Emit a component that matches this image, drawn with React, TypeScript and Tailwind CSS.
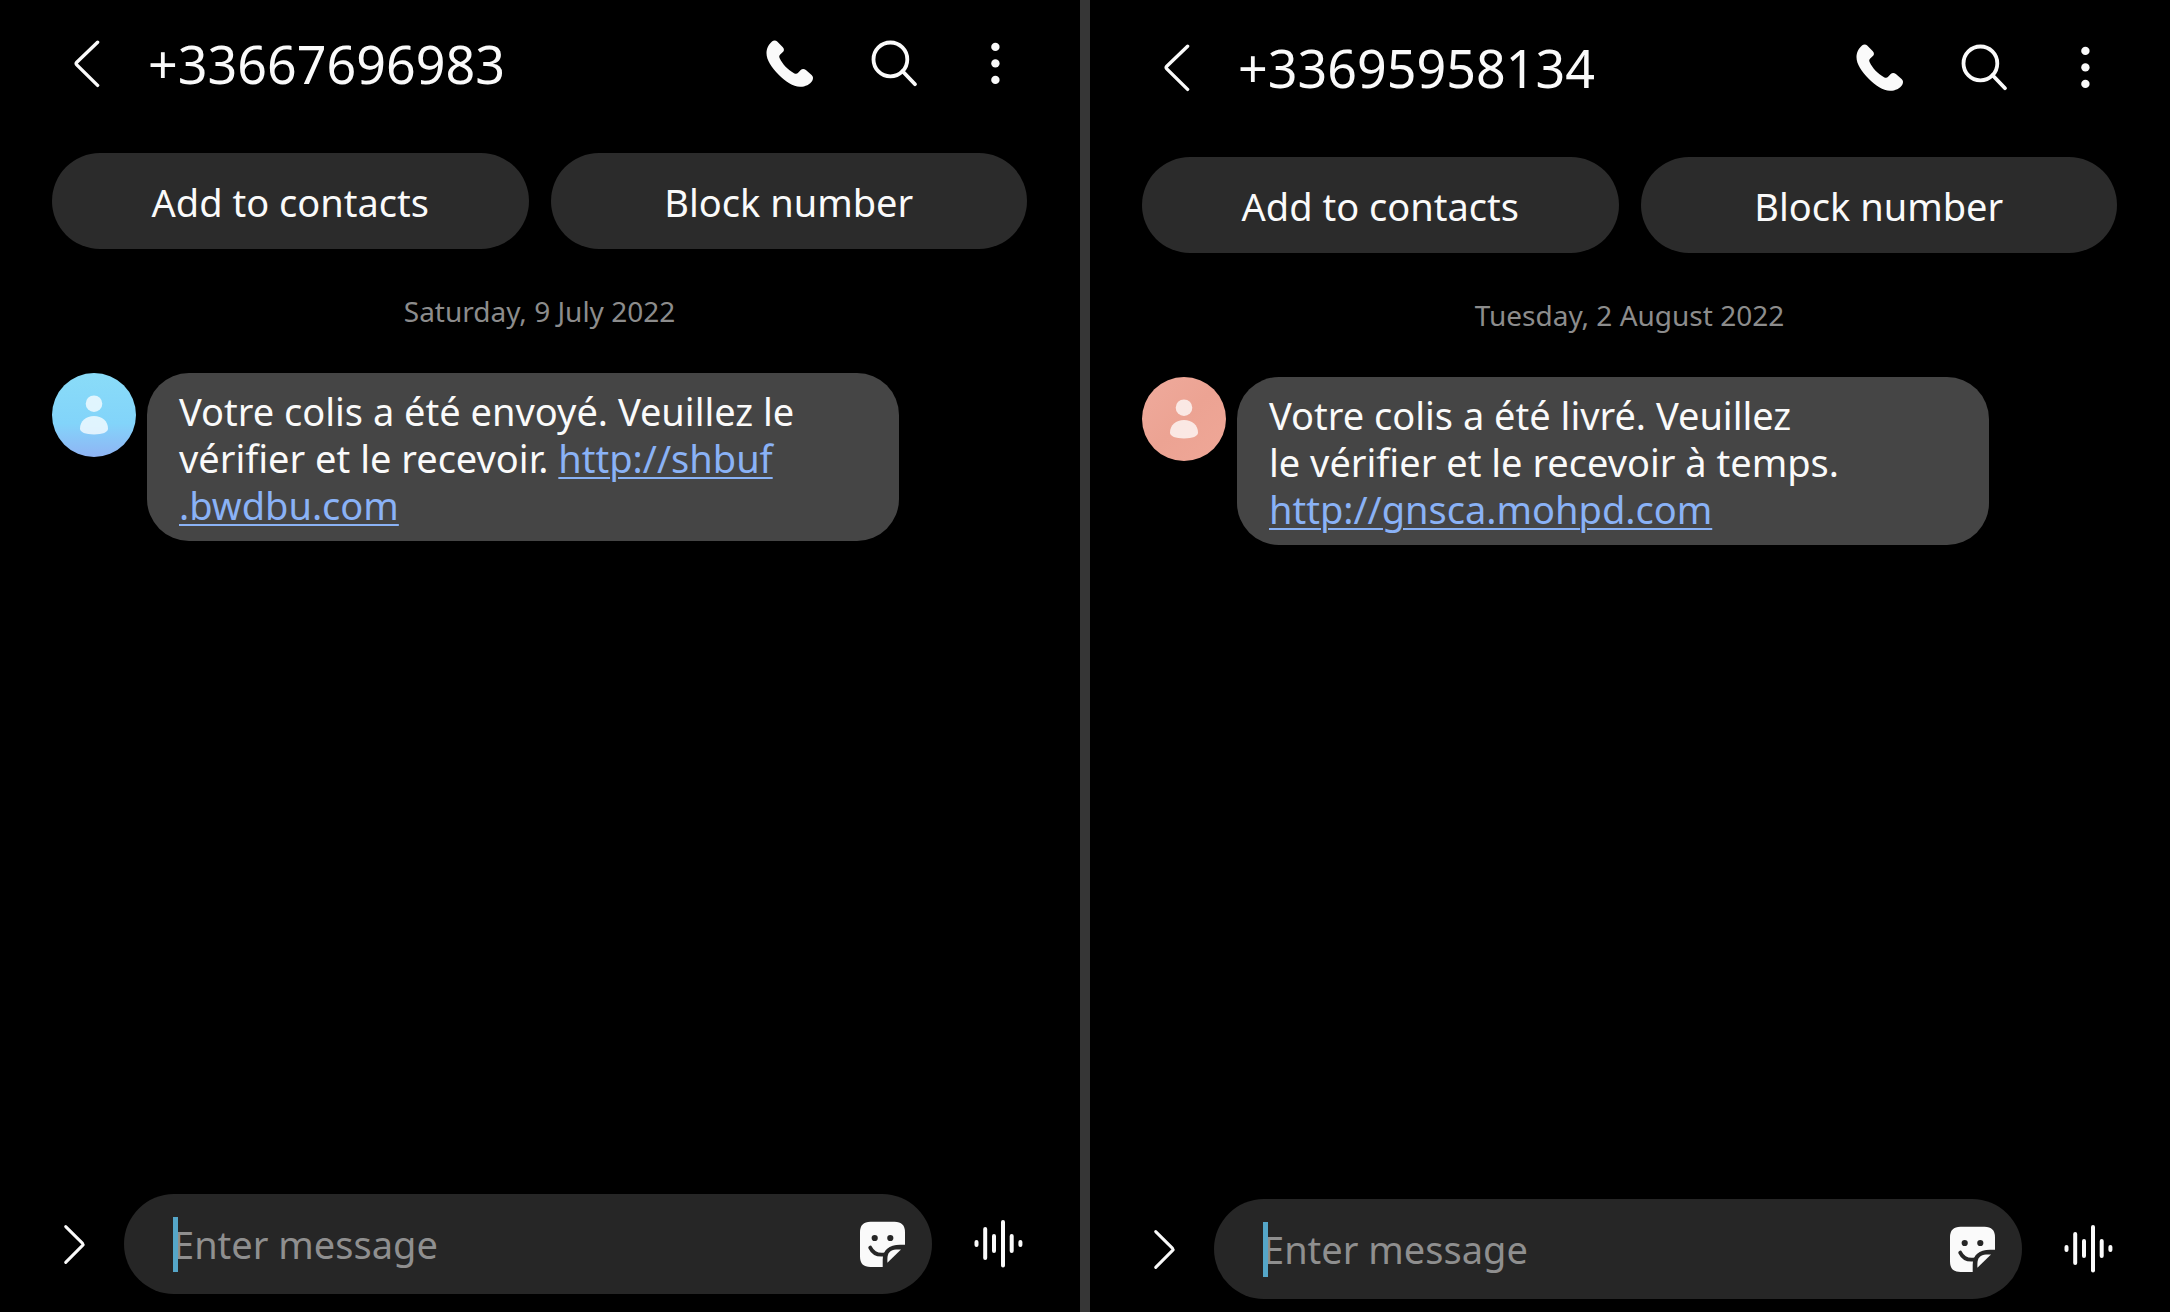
import { Fragment } from "react";
import type { ReactNode } from "react";

type Thread = {
  id: string;
  phone: string;
  date: string;
  lines: ReactNode[];
  headerClass: string;
  footerClass: string;
  avatarClass: string;
};

const linkClass = "text-[#8ab2f6] underline decoration-2 underline-offset-4";

const threads: Thread[] = [
  {
    id: "left",
    phone: "+33667696983",
    date: "Saturday, 9 July 2022",
    lines: [
      "Votre colis a été envoyé. Veuillez le",
      <>
        vérifier et le recevoir.{" "}
        <a href="#left-link" className={linkClass}>http://shbuf</a>
      </>,
      <a href="#left-link" className={linkClass}>.bwdbu.com</a>,
    ],
    headerClass: "pt-4",
    footerClass: "pb-[18px]",
    avatarClass: "bg-linear-to-b from-[#8adcf8] via-[#82d4fa] via-60% to-[#8fb4f4]",
  },
  {
    id: "right",
    phone: "+33695958134",
    date: "Tuesday, 2 August 2022",
    lines: [
      "Votre colis a été livré. Veuillez",
      "le vérifier et le recevoir à temps.",
      <a href="#right-link" className={linkClass}>http://gnsca.mohpd.com</a>,
    ],
    headerClass: "pt-5",
    footerClass: "pb-[13px]",
    avatarClass: "bg-linear-to-br from-[#efaa9c] via-[#eca393] to-[#efa797]",
  },
];

function BackIcon() {
  return (
    <svg viewBox="0 0 48 48" className="size-12" fill="none" stroke="#fafafa" strokeWidth="3.4" strokeLinecap="round" strokeLinejoin="round">
      <path d="M35.6 2.2 L14.8 22.2 Q13.4 23.5 14.8 24.9 L35.6 45.4" />
    </svg>
  );
}

function PhoneIcon() {
  return (
    <svg viewBox="0 0 48 48" className="size-12" fill="#fafafa">
      <path d="M8.7 .4C9.6 .4 10.5 .9 11.2 1.6L16.6 6.9C18.3 8.6 18.4 10.6 16.9 12.1L14.2 14.6C13 15.8 13 17 13.8 18.6C16.3 24 22 30 28 33.2C29.6 34 31 34 32.1 32.8L34.7 30.1C36.2 28.5 38.2 28.7 39.9 30L45.6 35C47.3 36.6 47.4 38.6 46.4 40.4C44 44.5 39 46.8 34 46.7C27 46.5 19.5 41.5 12.7 34.7C5.5 27.4 .5 20 .5 13.3C.4 8.6 2.6 4.3 6 1.4C6.8 .7 7.7 .4 8.7 .4Z" />
    </svg>
  );
}

function SearchIcon() {
  return (
    <svg viewBox="0 0 48 48" className="size-12" fill="none" stroke="#fafafa" strokeWidth="3.8" strokeLinecap="round">
      <circle cx="20.4" cy="19.4" r="16.9" />
      <path d="M32.6 31.2L45 44.2" />
    </svg>
  );
}

function MoreIcon() {
  return (
    <svg viewBox="0 0 48 48" className="size-12" fill="#fafafa">
      <circle cx="21.4" cy="6.9" r="4.2" />
      <circle cx="21.4" cy="23.4" r="4.2" />
      <circle cx="21.4" cy="39.9" r="4.2" />
    </svg>
  );
}

function ExpandIcon() {
  return (
    <svg viewBox="0 0 48 48" className="size-12" fill="none" stroke="#fafafa" strokeWidth="3" strokeLinecap="round" strokeLinejoin="round">
      <path d="M15.7 6.6L32.6 23.4Q33.5 24.4 32.6 25.4L15.7 42.4" />
    </svg>
  );
}

function StickerIcon() {
  return (
    <svg viewBox="0 0 48 48" className="size-12">
      <path fill="#fafafa" d="M11.5 1.8H35.5Q46 1.8 46 12.3V24.7H41C30 24.7 23.7 30 23.7 40V47H11.5Q1 47 1 36.5V12.3Q1 1.8 11.5 1.8Z" />
      <path fill="#fafafa" d="M42 29.4L28.4 42.8V38.4C28.4 33 31.6 29.4 37 29.4Z" />
      <circle cx="15.7" cy="18" r="3.1" fill="#262626" />
      <circle cx="31.3" cy="18" r="3.1" fill="#262626" />
      <path d="M11.2 27.6C13.6 32.6 18.5 35.6 26 34.4" fill="none" stroke="#262626" strokeWidth="3.8" strokeLinecap="round" />
    </svg>
  );
}

function VoiceIcon() {
  return (
    <svg viewBox="0 0 50 50" className="size-[50px]" fill="none" stroke="#fafafa" strokeWidth="4" strokeLinecap="round">
      <path d="M2.5 23V26M11.2 10V39M20 17V32M29 3V46.4M37.7 17V32M46.4 23V26" />
    </svg>
  );
}

function PersonIcon() {
  return (
    <svg viewBox="0 0 84 84" className="size-full" fill="#ffffff" fillOpacity="0.75">
      <circle cx="42" cy="30.7" r="8.3" />
      <path d="M28 55.5C28 48 34 43 42 43C50 43 56 48 56 55.5C56 59.5 50.5 61.4 42 61.4C33.5 61.4 28 59.5 28 55.5Z" />
    </svg>
  );
}

function ThreadPanel({ thread }: { thread: Thread }) {
  const inputId = `message-${thread.id}`;
  return (
    <section className="flex min-w-0 flex-1 flex-col">
      <header className={`flex items-center pr-[58px] pl-[62px] ${thread.headerClass}`}>
        <button type="button" aria-label="Back" className="shrink-0">
          <BackIcon />
        </button>
        <h1 className="ml-[38px] flex-1 text-[52px] leading-[96px] whitespace-nowrap">{thread.phone}</h1>
        <div className="flex gap-14">
          <button type="button" aria-label="Call"><PhoneIcon /></button>
          <button type="button" aria-label="Search"><SearchIcon /></button>
          <button type="button" aria-label="More options"><MoreIcon /></button>
        </div>
      </header>

      <div className="mt-[41px] flex gap-[22px] pr-[53px] pl-[52px]">
        <button type="button" className="h-24 flex-1 rounded-full bg-[#2b2b2b] pt-0.5 text-[38px] leading-[48px]">Add to contacts</button>
        <button type="button" className="h-24 flex-1 rounded-full bg-[#2b2b2b] pt-0.5 text-[38px] leading-[48px]">Block number</button>
      </div>

      <p className="mt-[42px] pr-[53px] pl-[52px] text-center text-[28px] leading-10 text-[#8c8c8c]">{thread.date}</p>

      <div className="mt-[42px] flex items-start gap-[11px] pr-[181px] pl-[52px]">
        <div className={`size-[84px] shrink-0 overflow-hidden rounded-full ${thread.avatarClass}`}>
          <PersonIcon />
        </div>
        <p className="flex-1 rounded-[42px] bg-[#454545] pt-[15px] pb-3 pl-8 text-[38px] leading-[47px] whitespace-nowrap">
          {thread.lines.map((line, i) => (
            <Fragment key={i}>
              {i > 0 && <br />}
              {line}
            </Fragment>
          ))}
        </p>
      </div>

      <footer className={`mt-auto flex items-center pr-14 pl-[50px] ${thread.footerClass}`}>
        <button type="button" aria-label="Show attachments" className="shrink-0">
          <ExpandIcon />
        </button>
        <div className="relative ml-[26px] flex h-[100px] min-w-0 flex-1 items-center rounded-full bg-[#262626] pr-[25px] pl-[49px]">
          <label htmlFor={inputId} className="absolute inset-0 -z-10" aria-label="Message" />
          <input
            id={inputId}
            type="text"
            placeholder="Enter message"
            className="h-16 min-w-0 flex-1 bg-transparent text-[38px] leading-[56px] outline-none placeholder:text-[#8f8f8f]"
          />
          <span className="absolute left-[49px] h-[55px] w-[5px] bg-[#55a6c8]" />
          <button type="button" aria-label="Stickers" className="shrink-0">
            <StickerIcon />
          </button>
        </div>
        <button type="button" aria-label="Voice message" className="ml-[42px] shrink-0">
          <VoiceIcon />
        </button>
      </footer>
    </section>
  );
}

export default function App() {
  return (
    <main className="flex min-h-screen bg-black font-['Noto_Sans',sans-serif] text-[#fafafa]">
      <ThreadPanel thread={threads[0]} />
      <div className="w-[10px] shrink-0 bg-[#363636]" />
      <ThreadPanel thread={threads[1]} />
    </main>
  );
}
